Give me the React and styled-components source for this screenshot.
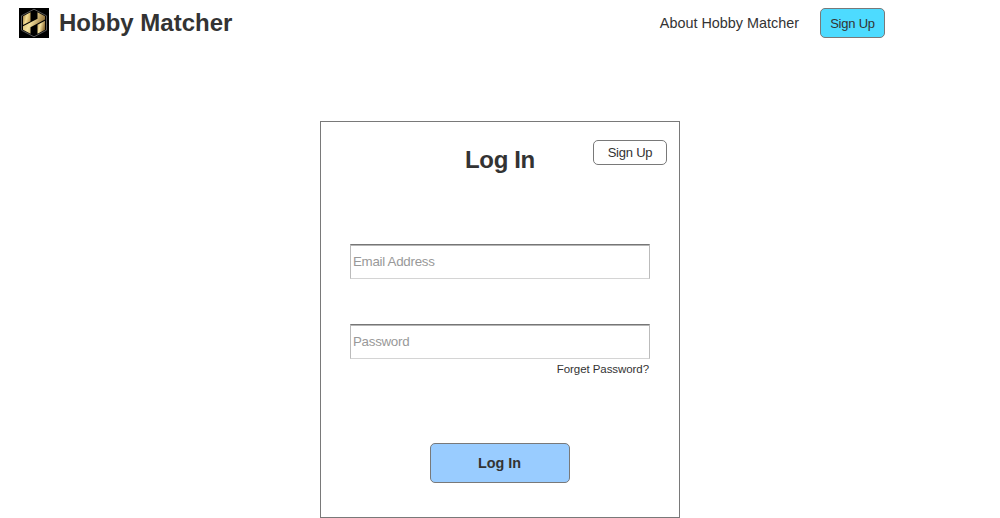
import React from 'react';
import styled, { createGlobalStyle } from 'styled-components';

const GlobalStyle = createGlobalStyle`
  * { box-sizing: border-box; }
  html, body { margin: 0; background: #fff; overflow: hidden; }
  body { font-family: "Liberation Sans", Arial, sans-serif; color: #333; }
`;

const Page = styled.div`
  display: flex;
  flex-direction: column;
  align-items: center;
  height: 518px;
`;

const Header = styled.header`
  display: flex;
  align-items: flex-start;
  width: 100%;
  height: 121px;
  flex: none;
  padding: 8px 115px 0 19px;
`;

const LogoSvg = styled.svg`
  display: block;
  width: 30px;
  height: 30px;
  margin-right: 10px;
`;

const Brand = styled.h1`
  margin: 0;
  font-size: 24px;
  line-height: 30px;
  white-space: nowrap;
`;

const Nav = styled.nav`
  display: flex;
  gap: 21px;
  margin-left: auto;
`;

const NavLink = styled.a`
  font-size: 14.4px;
  line-height: 30px;
  white-space: nowrap;
`;

const Button = styled.button`
  width: ${(p) => p.$width}px;
  height: ${(p) => p.$height}px;
  padding: 0;
  border: 1px solid #797979;
  border-radius: 5px;
  background: ${(p) => p.$fill || '#fff'};
  color: #333;
  font-family: inherit;
  font-size: ${(p) => (p.$strong ? 14.4 : 13)}px;
  font-weight: ${(p) => (p.$strong ? 700 : 400)};
  line-height: 15px;
  letter-spacing: ${(p) => (p.$strong ? 0 : -0.22)}px;
`;

const Card = styled.main`
  display: flex;
  flex-direction: column;
  width: 360px;
  height: 397px;
  flex: none;
  padding: 18px 12px 0 29px;
  border: 1px solid #797979;
`;

const CardHeader = styled.div`
  display: grid;
  grid-template-columns: 74px 1fr 74px;
  margin-left: -17px;
  height: 104px;
  align-items: start;
`;

const Title = styled.h2`
  grid-column: 2;
  margin: 5px 0 0;
  font-size: 24px;
  line-height: 30px;
  letter-spacing: -0.35px;
  text-align: center;
`;

const Form = styled.form`
  display: flex;
  flex-direction: column;
  width: 300px;
`;

const Field = styled.input`
  display: block;
  width: 300px;
  height: 35px;
  margin-bottom: ${(p) => p.$gap}px;
  padding: 0 2px;
  border: 1px solid #bbb;
  border-top-color: #767676;
  border-bottom-color: #d4d4d4;
  border-radius: 0;
  outline: none;
  box-shadow: inset 0 1px #b5b5b5;
  font-family: inherit;
  font-size: 13.33px;
  letter-spacing: -0.28px;
  &::placeholder { color: #999; opacity: 1; }
`;

const ForgotLink = styled.a`
  align-self: flex-end;
  margin: 0 1px 67px 0;
  font-size: 11.5px;
  line-height: 14px;
  letter-spacing: -0.07px;
`;

const Submit = styled(Button)`
  align-self: center;
  padding-right: 1px;
`;

function Logo() {
  return (
    <LogoSvg viewBox="0 0 30 30" aria-label="Hobby Matcher logo">
      <defs>
        <linearGradient id="goldLeft" x1="0" x2="1" y1="0" y2="0.4">
          <stop offset="0" stopColor="#9a763c" />
          <stop offset="0.55" stopColor="#f3dd94" />
          <stop offset="1" stopColor="#c9a65b" />
        </linearGradient>
        <linearGradient id="goldRight" x1="0" x2="1" y1="0" y2="0.4">
          <stop offset="0" stopColor="#c9a75d" />
          <stop offset="0.45" stopColor="#f5e3a0" />
          <stop offset="1" stopColor="#8b6932" />
        </linearGradient>
      </defs>
      <rect width="30" height="30" fill="#000" />
      <path d="M15 1.2 27.5 7.8v14.4L15 28.8 2.5 22.2V7.8Z" fill="none" stroke="#707070" strokeWidth="0.8" />
      <path d="M4 8.2 11.5 4.2V13.2L4 17Z" fill="url(#goldLeft)" />
      <path d="M4 18.2 18.5 10.8V4.2L26 8.2V11.6L11.5 19.2V25.8L4 21.8Z" fill="url(#goldRight)" />
      <path d="M26 12.8V21.8L18.5 25.8V16.7Z" fill="url(#goldRight)" />
    </LogoSvg>
  );
}

export default function App() {
  return (
    <>
      <GlobalStyle />
      <Page>
        <Header>
          <Logo />
          <Brand>Hobby Matcher</Brand>
          <Nav>
            <NavLink>About Hobby Matcher</NavLink>
            <Button $width={65} $height={30} $fill="#4ddbff">Sign Up</Button>
          </Nav>
        </Header>
        <Card>
          <CardHeader>
            <Title>Log In</Title>
            <Button $width={74} $height={25}>Sign Up</Button>
          </CardHeader>
          <Form>
            <Field type="email" placeholder="Email Address" $gap={45} />
            <Field type="password" placeholder="Password" $gap={3} />
            <ForgotLink>Forget Password?</ForgotLink>
            <Submit type="button" $width={140} $height={40} $fill="#99ccff" $strong>Log In</Submit>
          </Form>
        </Card>
      </Page>
    </>
  );
}
